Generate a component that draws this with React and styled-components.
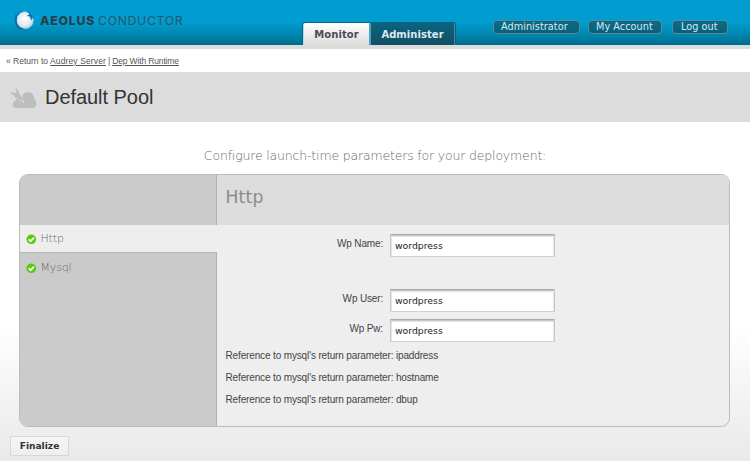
import React from "react";
import styled, { createGlobalStyle } from "styled-components";

const GlobalStyle = createGlobalStyle`
  * { box-sizing: border-box; }
  html { background: #fff; }
  body { margin: 0; width: 750px; height: 461px; overflow: hidden; }
  h1, h2, p, ul { margin: 0; padding: 0; font-weight: normal; }
  ul { list-style: none; }
`;

const sans = `"DejaVu Sans", sans-serif`;
const helvetica = `"Liberation Sans", Arial, sans-serif`;

const Page = styled.div`
  width: 750px;
  height: 461px;
  display: flex;
  flex-direction: column;
  background: linear-gradient(#fff 0, #fff 325px, #e9e9e9 461px);
  font-family: ${helvetica};
  color: #444;
`;

const Header = styled.header`
  display: flex;
  flex: none;
  height: 49px;
  border-bottom: 4px solid #dcdcdc;
  background: linear-gradient(#019dd0 0, #019dd0 22px, #0087b1 34px, #006d8e 45px);
`;

const Brand = styled.div`
  display: flex;
  width: 302px;
  padding: 8px 0 0 11px;
`;

const BrandName = styled.div`
  display: flex;
  padding: 5px 0 0 3px;
  font: 400 12.3px/16px Inter, sans-serif;
  color: #2a5668;
  white-space: nowrap;
  letter-spacing: 0.65px;
`;

const BrandStrong = styled.span`
  width: 58px;
  font-weight: 800;
  color: #263f4a;
  letter-spacing: 0.8px;
`;

const Tabs = styled.nav`
  display: flex;
  width: 154px;
  height: 23px;
  margin-top: 22px;
  border: 1px solid #086583;
  border-bottom: 0;
  border-radius: 3px 3px 0 0;
`;

const Tab = styled.a`
  width: ${(p) => (p.$active ? 66 : 86)}px;
  border-left: ${(p) => (p.$active ? "1px solid #b9d9e4" : "2px solid #4aa5bf")};
  border-right: ${(p) => (p.$active ? "0" : "1px solid #488ba0")};
  border-radius: ${(p) => (p.$active ? "2px 0 0 0" : "0 2px 0 0")};
  background: ${(p) => (p.$active ? "linear-gradient(#fff, #dcdcdc)" : "linear-gradient(#0b6480, #124f63)")};
  color: ${(p) => (p.$active ? "#4b4b55" : "#dceaf0")};
  font: bold 10px/23px ${sans};
  letter-spacing: 0.05px;
  text-align: center;
`;

const UserNav = styled.nav`
  display: flex;
  padding: 20px 0 0 37px;
`;

const Pill = styled.a`
  width: ${(p) => p.$width}px;
  height: 14px;
  margin-right: ${(p) => p.$gap || 0}px;
  padding-left: ${(p) => p.$pad}px;
  border: 1px solid #588b9a;
  border-radius: 4px;
  background: linear-gradient(#0a6c8a, #0b5f79);
  color: #d5eaf1;
  font: 9.7px/12px ${sans};
  letter-spacing: 0.05px;
  white-space: nowrap;
`;

const Crumbs = styled.div`
  display: flex;
  gap: 2px;
  flex: none;
  height: 23px;
  padding: 6px 0 0 6px;
  background: #fff;
  font-size: 8.5px;
  line-height: 12px;
  color: #555;
`;

const CrumbLink = styled.a`
  text-decoration: underline;
  letter-spacing: ${(p) => p.$spacing}px;
`;

const TitleBar = styled.div`
  display: flex;
  flex: none;
  height: 50px;
  padding-left: 10px;
  background: #dcdcdc;
`;

const PoolIcon = styled.svg`
  width: 27px;
  height: 24px;
  margin: 14px 8px 0 0;
`;

const PageTitle = styled.h1`
  font-size: 20px;
  line-height: 50px;
  letter-spacing: -0.05px;
  color: #333;
`;

const Intro = styled.p`
  flex: none;
  height: 52px;
  padding-top: 26px;
  text-align: center;
  font: 200 12.5px/16px ${sans};
  letter-spacing: -0.17px;
  color: #686868;
`;

const Panel = styled.section`
  display: flex;
  flex: none;
  width: 711px;
  height: 253px;
  margin-left: 19px;
  overflow: hidden;
  border: 1px solid #bcbcbc;
  border-radius: 9px;
  background: #eee;
`;

const Sidebar = styled.ul`
  display: flex;
  flex-direction: column;
  width: 197px;
  background: #cacaca;

  &::before, &::after {
    content: "";
    height: 50px;
    border-right: 1px solid #b0b0b0;
    background: repeating-linear-gradient(150deg, #cbcbcb 0 3px, #cacaca 4px 5px, #cbcbcb 7px);
  }
  &::after { flex: 1; }
`;

const Service = styled.li`
  display: flex;
  align-items: center;
  height: 28px;
  padding: 1px 0 0 6px;
  gap: 3.5px;
  background: ${(p) => (p.$active ? "#eee" : "#cacaca")};
  border-bottom: ${(p) => (p.$active ? "1px solid #b7b7b7" : "0")};
  border-right: ${(p) => (p.$active ? "0" : "1px solid #b0b0b0")};
  font: 200 11px/14px ${sans};
  letter-spacing: -0.15px;
  color: #666;
`;

const Check = styled.svg`
  width: 11px;
  height: 11px;
  margin-top: 1px;
`;

const Content = styled.div`
  flex: 1;
`;

const ContentTitle = styled.h2`
  height: 50px;
  padding-left: 8.5px;
  background: #dcdcdc;
  font: 17.2px/45px ${sans};
  letter-spacing: 0.2px;
  color: #8b8b8b;
`;

const Field = styled.label`
  display: flex;
  height: 23px;
  margin-top: ${(p) => p.$top}px;
  font-size: 10px;
  line-height: 20px;
  letter-spacing: -0.16px;
`;

const FieldLabel = styled.span`
  width: 166px;
  margin-right: 7px;
  text-align: right;
`;

const Input = styled.input`
  width: 165px;
  height: 23px;
  padding: 0 4px;
  border: 1px solid #c8c8c8;
  border-top: 1px solid #aaa;
  border-bottom-color: #d2d2d2;
  border-radius: 0;
  outline: 0;
  background: #fff;
  box-shadow: inset 0 1px #c7c7c7, inset 1px 2px 1px #e4e4e4, inset -1px 0 #e4e4e4;
  color: #222;
  font: 9.3px/14px ${sans};
`;

const References = styled.div`
  padding: 3px 0 0 8.5px;
  font-size: 10px;
  line-height: 22px;
  letter-spacing: -0.14px;
`;

const Finalize = styled.button`
  flex: none;
  width: 59px;
  height: 20px;
  margin: 9px 0 0 10px;
  padding: 0;
  border: 1px solid #d7d7d7;
  border-radius: 1px;
  background: linear-gradient(#f5f5f5, #eee);
  color: #333;
  font: bold 9.1px/18px ${sans};
`;

const LogoMark = () => (
  <svg width="26" height="25" viewBox="0 0 26 25">
    <defs>
      <radialGradient id="orb" cx="48%" cy="42%" r="60%">
        <stop offset="0" stopColor="#fff" />
        <stop offset=".65" stopColor="#e4eaf3" />
        <stop offset="1" stopColor="#a3cfe5" />
      </radialGradient>
      <radialGradient id="glow">
        <stop offset="0" stopColor="#076b9c" stopOpacity=".9" />
        <stop offset="1" stopColor="#0789b8" stopOpacity="0" />
      </radialGradient>
    </defs>
    <ellipse cx="12.5" cy="19" rx="11" ry="6" fill="url(#glow)" />
    <circle cx="13.3" cy="12" r="9.6" fill="#48b4dd" />
    <path d="M5 5.5Q1.5 14 7 20Q11 22 15 21L8 15Z" fill="#0d65a4" />
    <circle cx="14" cy="12.4" r="8.3" fill="url(#orb)" />
    <path d="M5 7Q8 2 14 3Q9 3.5 7.5 7Q4.5 9 5 14Q3.8 10.5 5 7Z" fill="#167dbb" />
    <path d="M15 2.8Q21 4 22.6 11L21 10L20.4 13L18.8 8.5L16 8L18.5 6Z" fill="#0872b1" />
  </svg>
);

const StatusCheck = () => (
  <Check viewBox="0 0 11 11">
    <circle cx="5.3" cy="5.3" r="4.8" fill="#4fce0c" />
    <path d="M2.7 5.3L4.6 7.2L8 3.6" fill="none" stroke="#fff" strokeWidth="1.8" />
  </Check>
);

export default function App() {
  return (
    <>
      <GlobalStyle />
      <Page>
        <Header>
          <Brand>
            <LogoMark />
            <BrandName><BrandStrong>AEOLUS</BrandStrong>CONDUCTOR</BrandName>
          </Brand>
          <Tabs>
            <Tab $active>Monitor</Tab>
            <Tab>Administer</Tab>
          </Tabs>
          <UserNav>
            <Pill $width={87} $pad={7} $gap={8}>Administrator</Pill>
            <Pill $width={74} $pad={7} $gap={10}>My Account</Pill>
            <Pill $width={56} $pad={8}>Log out</Pill>
          </UserNav>
        </Header>
        <Crumbs>
          <span>« Return to</span>
          <CrumbLink $spacing={0.12}>Audrey Server</CrumbLink>
          <span>|</span>
          <CrumbLink $spacing={-0.14}>Dep With Runtime</CrumbLink>
        </Crumbs>
        <TitleBar>
          <PoolIcon viewBox="0 0 27 24">
            <path d="M2.8 18.5Q3.2 14.8 6 14.5Q4.5 11 8 10.5H12.5Q13.2 6.3 18 6.3Q24 6.5 24 12.5Q26.3 14.5 26.3 18Q26 22 22 22H7Q2.8 22 2.8 18.5Z" fill="#bdbdbd" />
            <path d="M0 5.7L6.3 7.4L5.7 1.3L9.8 8L13.5 16L5.5 11.4Z" fill="#bdbdbd" stroke="#dcdcdc" strokeWidth="1.2" paintOrder="stroke" />
          </PoolIcon>
          <PageTitle>Default Pool</PageTitle>
        </TitleBar>
        <Intro>Configure launch-time parameters for your deployment:</Intro>
        <Panel>
          <Sidebar>
            <Service $active><StatusCheck />Http</Service>
            <Service><StatusCheck />Mysql</Service>
          </Sidebar>
          <Content>
            <ContentTitle>Http</ContentTitle>
            <Field $top={9}><FieldLabel>Wp Name:</FieldLabel><Input defaultValue="wordpress" /></Field>
            <Field $top={32}><FieldLabel>Wp User:</FieldLabel><Input defaultValue="wordpress" /></Field>
            <Field $top={7}><FieldLabel>Wp Pw:</FieldLabel><Input defaultValue="wordpress" /></Field>
            <References>
              <p>Reference to mysql's return parameter: ipaddress</p>
              <p>Reference to mysql's return parameter: hostname</p>
              <p>Reference to mysql's return parameter: dbup</p>
            </References>
          </Content>
        </Panel>
        <Finalize>Finalize</Finalize>
      </Page>
    </>
  );
}
